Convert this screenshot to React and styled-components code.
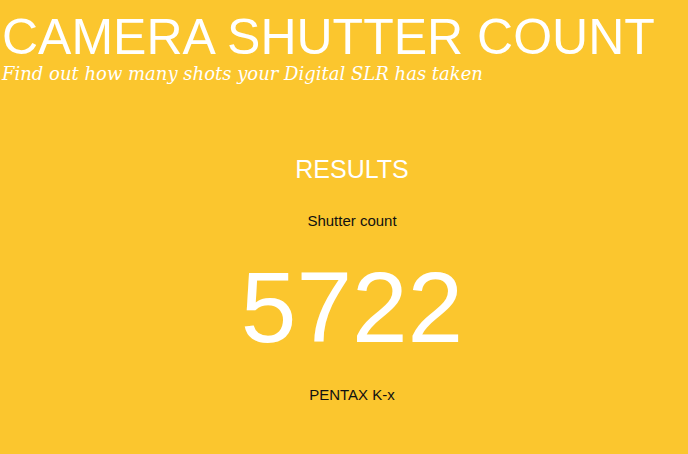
import React from "react";
import styled, { createGlobalStyle } from "styled-components";

const Global = createGlobalStyle`
  html, body { margin: 0; padding: 0; background: #fbc62e; }
  body { font-family: "Liberation Sans", Arial, sans-serif; width: 688px; height: 454px; overflow: hidden; }
`;

const Page = styled.div`
  display: flex;
  flex-direction: column;
`;

const Header = styled.header`
  display: flex;
  flex-direction: column;
  padding: 0 0 0 2px;
`;

const Title = styled.h1`
  margin: 0;
  padding-top: 11px;
  font-family: "Liberation Sans", Arial, sans-serif;
  font-weight: normal;
  font-size: 50px;
  line-height: 52px;
  color: #ffffff;
  white-space: nowrap;
`;

const Tagline = styled.p`
  margin: 0;
  font-family: "DejaVu Serif", Georgia, serif;
  font-style: italic;
  font-size: 18px;
  line-height: 22px;
  color: #ffffff;
  white-space: nowrap;
`;

const Results = styled.section`
  display: flex;
  flex-direction: column;
  align-items: center;
  padding-left: 16px;
  padding-top: 69px;
`;

const ResultsHeading = styled.h2`
  margin: 0;
  font-weight: normal;
  font-size: 25px;
  line-height: 30px;
  color: #ffffff;
`;

const Label = styled.div`
  margin-top: ${(p) => p.$top}px;
  font-size: 15px;
  line-height: 16px;
  color: #111;
`;

const Count = styled.div`
  margin-top: 28px;
  font-size: 100px;
  line-height: 100px;
  color: #ffffff;
`;

export default function App() {
  return (
    <Page>
      <Global />
      <Header>
        <Title>CAMERA SHUTTER COUNT</Title>
        <Tagline>Find out how many shots your Digital SLR has taken</Tagline>
      </Header>
      <Results>
        <ResultsHeading>RESULTS</ResultsHeading>
        <Label $top={29}>Shutter count</Label>
        <Count>5722</Count>
        <Label $top={30}>PENTAX K-x</Label>
      </Results>
    </Page>
  );
}
